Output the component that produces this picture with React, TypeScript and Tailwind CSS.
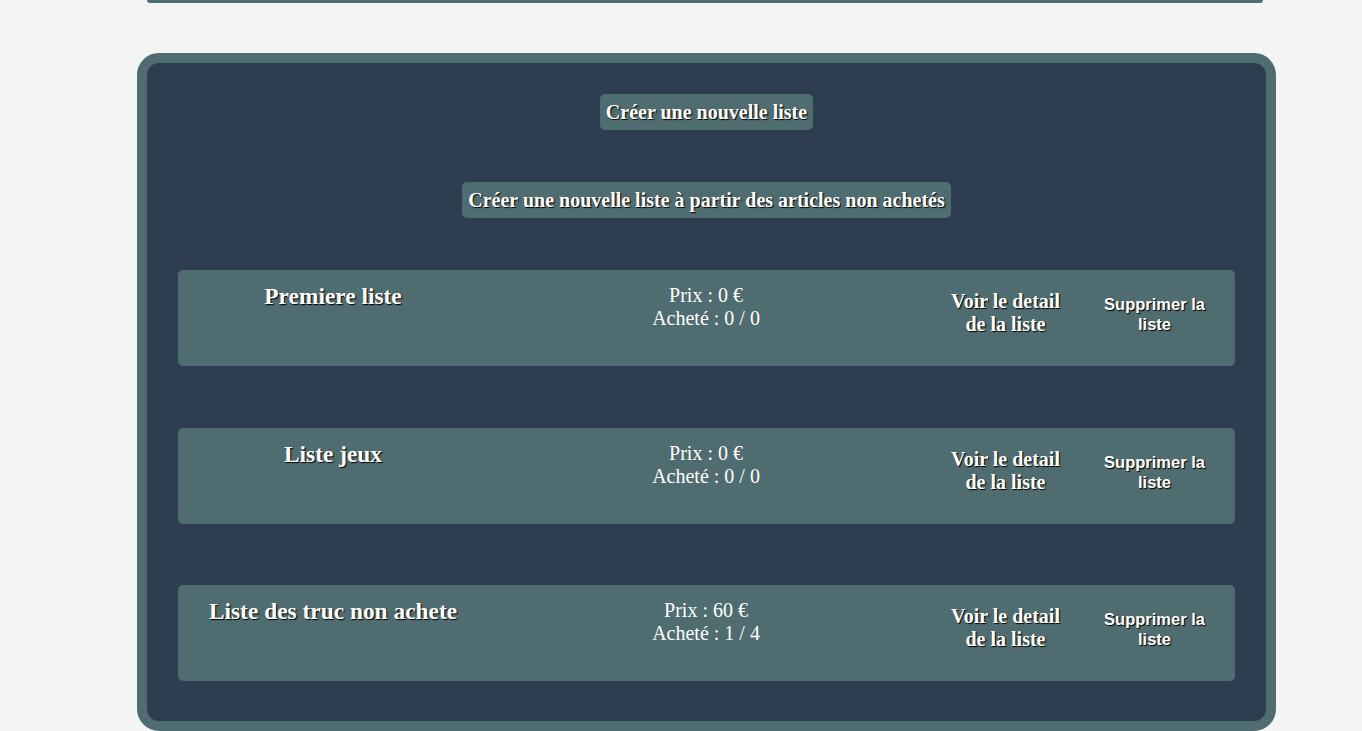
import React from 'react'

type Liste = {
  nom: string
  prix: number
  achetes: number
  total: number
}

const listes: Liste[] = [
  { nom: 'Premiere liste', prix: 0, achetes: 0, total: 0 },
  { nom: 'Liste jeux', prix: 0, achetes: 0, total: 0 },
  { nom: 'Liste des truc non achete', prix: 60, achetes: 1, total: 4 },
]

const shadow = '[text-shadow:1px_1px_1px_#000]'

const CarteListe: React.FC<{ liste: Liste }> = ({ liste }) => {
  return (
    <div className="flex items-start w-full h-[96px] bg-[#4f6c70] rounded-[5px] text-white">
      <div className="w-[310px] shrink-0 pt-[12px] text-center">
        <h3 className={`text-[23.4px] leading-[28px] font-bold ${shadow}`}>{liste.nom}</h3>
      </div>
      <div className="w-[436px] shrink-0 pt-[14px] text-center text-[20px] leading-[23px]">
        <p>Prix : {liste.prix} €</p>
        <p>Acheté : {liste.achetes} / {liste.total}</p>
      </div>
      <div className="w-[163px] shrink-0 pt-[20px] flex justify-center">
        <button className={`bg-transparent text-white font-bold text-[20px] leading-[23px] text-center w-[120px] ${shadow}`}>
          Voir le detail de la liste
        </button>
      </div>
      <div className="w-[135px] shrink-0 pt-[24px] flex justify-center">
        <button
          className={`bg-transparent text-white font-bold text-[16.5px] leading-[20px] text-center w-[112px] ${shadow}`}
          style={{ fontFamily: '"Liberation Sans", Arial, sans-serif' }}
        >
          Supprimer la liste
        </button>
      </div>
    </div>
  )
}

export default function App() {
  return (
    <div className="min-h-screen bg-[#f4f4f4] font-['Liberation_Serif','Times_New_Roman',serif]">
      <div className="ml-[147px] w-[1116px] h-[3px] bg-[#4f6c70] rounded-b-[6px]" />
      <div className="mt-[50px] ml-[137px] w-[1139px] border-[10px] border-[#4f6c70] rounded-[22px] bg-[#2c3e50]">
        <div className="flex flex-col items-center pt-[31px] pb-[40px] px-[31px]">
          <button className={`h-[36px] px-[6px] bg-[#4f6c70] rounded-[5px] text-white font-bold text-[20px] leading-[23px] ${shadow}`}>
            Créer une nouvelle liste
          </button>
          <button className={`mt-[52px] h-[36px] px-[6px] bg-[#4f6c70] rounded-[5px] text-white font-bold text-[20px] leading-[23px] ${shadow}`}>
            Créer une nouvelle liste à partir des articles non achetés
          </button>
          <div className="mt-[52px] w-full flex flex-col gap-[61.5px]">
            {listes.map((l) => (
              <CarteListe key={l.nom} liste={l} />
            ))}
          </div>
        </div>
      </div>
    </div>
  )
}
